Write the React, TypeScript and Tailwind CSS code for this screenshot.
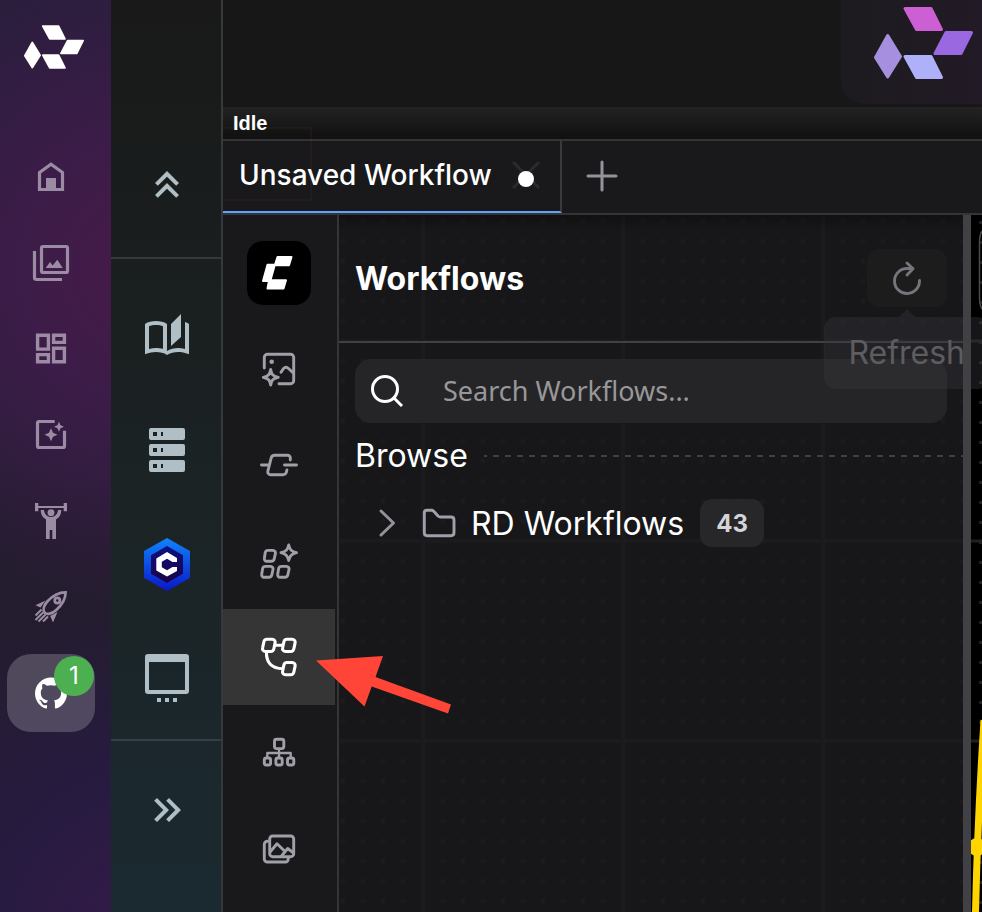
import React from 'react';
import { SiGithub } from 'react-icons/si';

interface IconProps {
  className?: string;
}

interface NavEntry {
  label: string;
  icon: React.FC<IconProps>;
}

// Brand mark, shared by the left rail (white) and the top right corner (tinted)
const BrandMark: React.FC<{ className?: string; colors: string[] }> = ({ className, colors }) => (
  <svg viewBox="0 0 99 72" className={className} strokeWidth="3" strokeLinejoin="round" aria-hidden="true">
    <path d="M31 1.5H57L67.5 22.5H42.5Z" fill={colors[0]} stroke={colors[0]} />
    <path d="M72 25.5H97.5L87 46.5H61Z" fill={colors[1]} stroke={colors[1]} />
    <path d="M31 49.5H57L67.5 70.5H42.5Z" fill={colors[2]} stroke={colors[2]} />
    <path d="M13.7 28.5L26.5 49.5L13.7 70L1.5 50.5Z" fill={colors[3]} stroke={colors[3]} />
  </svg>
);

/* ---------- Left rail icons ---------- */

const HomeIcon: React.FC<IconProps> = ({ className }) => (
  <svg viewBox="0 0 40 40" className={className} fill="none" stroke="currentColor" strokeWidth="3.2">
    <path d="M8.5 32.5V15.5L20 7.2 31.5 15.5V32.5Z" />
    <path d="M15 21H25V33H15Z" fill="currentColor" stroke="none" />
  </svg>
);

const GalleryIcon: React.FC<IconProps> = ({ className }) => (
  <svg viewBox="0 0 40 40" className={className} fill="none" stroke="currentColor" strokeWidth="3.2">
    <rect x="10.5" y="3.5" width="26" height="26" rx="1.5" />
    <path d="M3.5 8V34.5a2 2 0 0 0 2 2H31" />
    <path d="M14.7 25 19 19 21.7 22.5 26.3 16.7 31.7 25Z" fill="currentColor" stroke="none" />
  </svg>
);

const DashboardIcon: React.FC<IconProps> = ({ className }) => (
  <svg viewBox="0 0 40 40" className={className} fill="none" stroke="currentColor" strokeWidth="3.4">
    <path d="M6.6 6.3H17.4V20.1H6.6Z M22.6 6.3H33.4V13.4H22.6Z M22.6 19.3H33.4V32.7H22.6Z M6.6 25.6H17.4V32.7H6.6Z" />
  </svg>
);

const EnhanceIcon: React.FC<IconProps> = ({ className }) => (
  <svg viewBox="0 0 40 40" className={className} fill="none" stroke="currentColor" strokeWidth="3.2">
    <path d="M23.7 6.5H8a1.5 1.5 0 0 0-1.5 1.5V31a1.5 1.5 0 0 0 1.5 1.5H32a1.5 1.5 0 0 0 1.5-1.5V15.7" />
    <g fill="currentColor" stroke="none">
      <path d="M20 13.2 22 17.7 26.5 19.7 22 21.7 20 26.2 18 21.7 13.5 19.7 18 17.7Z" />
      <path d="M28 6.8 29.5 10.2 33 11.7 29.5 13.2 28 16.7 26.5 13.2 23 11.7 26.5 10.2Z" />
    </g>
  </svg>
);

const TrainingIcon: React.FC<IconProps> = ({ className }) => (
  <svg viewBox="0 0 40 40" className={className} fill="currentColor">
    <path d="M4 2H7.3V5H32.7V2H36V10.3H32.7V7H7.3V10.3H4Z" />
    <circle cx="20" cy="11.7" r="3.4" />
    <path d="M9.7 9H13C13.3 13 16 16 20 16S26.7 13 27 9H30.3C30.3 13.5 28.5 16.5 25 18.5V38H21.3V29H18.7V38H15V18.5C11.5 16.5 9.7 13.5 9.7 9Z" />
  </svg>
);

const RocketIcon: React.FC<IconProps> = ({ className }) => (
  <svg viewBox="0 0 40 40" className={className} fill="none" stroke="currentColor" strokeWidth="2.7">
    <path d="M34.6 5.4C27.5 5.4 21.5 8.7 16.3 14.5 12.8 18.5 11.6 23 13.6 25.6 16 28 21 26.8 25 23.2 31 17.8 34.6 12 34.6 5.4Z" />
    <circle cx="26.3" cy="13.5" r="2.6" />
    <path d="M14.5 13.5 4.5 18.3 9.5 20.5Z M26.5 25 22 35.5 19.2 29Z" fill="currentColor" stroke="none" />
    <path d="M10.5 22.5 4.5 28.5M12 25.5 4.5 33M14.5 27.5 7.5 34.5M17 29.5 12 34.5" strokeWidth="2" />
  </svg>
);

/* ---------- Second rail icons ---------- */

const ChevronsUpIcon: React.FC<IconProps> = ({ className }) => (
  <svg viewBox="0 0 24 24" className={className} fill="currentColor">
    <path d="M7.41,18.41L6,17L12,11L18,17L16.59,18.41L12,13.83L7.41,18.41M7.41,12.41L6,11L12,5L18,11L16.59,12.41L12,7.83L7.41,12.41Z" />
  </svg>
);

const ChevronsRightIcon: React.FC<IconProps> = ({ className }) => (
  <svg viewBox="0 0 24 24" className={className} fill="currentColor">
    <path d="M5.59,7.41L7,6L13,12L7,18L5.59,16.59L10.17,12L5.59,7.41M11.59,7.41L13,6L19,12L13,18L11.59,16.59L16.17,12L11.59,7.41Z" />
  </svg>
);

const BookIcon: React.FC<IconProps> = ({ className }) => (
  <svg viewBox="0 0 24 24" className={className} fill="currentColor">
    <path d="M19 1L14 6V17L19 12.5V1M21 5V18.5C19.9 18.15 18.7 18 17.5 18C15.8 18 13.35 18.65 12 19.5V6C10.55 4.9 8.45 4.5 6.5 4.5C4.55 4.5 2.45 4.9 1 6V21.15C3.1 20.45 5.05 20 6.5 20C8.45 20 10.55 20.4 12 21.5C13.35 20.65 15.8 20 17.5 20C19.15 20 20.85 20.3 23 21.1V6C22.4 5.55 21.75 5.25 21 5M10 18.41C8.75 18.09 7.5 18 6.5 18C5.44 18 4.18 18.19 3 18.5V7.13C3.91 6.73 5.14 6.5 6.5 6.5C7.86 6.5 9.09 6.73 10 7.13V18.41Z" />
  </svg>
);

const ServerIcon: React.FC<IconProps> = ({ className }) => (
  <svg viewBox="0 0 24 24" className={className} fill="currentColor" fillRule="evenodd">
    <path d="M4 1H20a1 1 0 0 1 1 1V6a1 1 0 0 1-1 1H4a1 1 0 0 1-1-1V2a1 1 0 0 1 1-1ZM5 3V5H7V3ZM9 3V5H10V3Z" />
    <path d="M4 9H20a1 1 0 0 1 1 1V14a1 1 0 0 1-1 1H4a1 1 0 0 1-1-1V10a1 1 0 0 1 1-1ZM5 11V13H7V11ZM9 11V13H10V11Z" />
    <path d="M4 17H20a1 1 0 0 1 1 1V22a1 1 0 0 1-1 1H4a1 1 0 0 1-1-1V18a1 1 0 0 1 1-1ZM5 19V21H7V19ZM9 19V21H10V19Z" />
  </svg>
);

const HexagonIcon: React.FC<IconProps> = ({ className }) => (
  <svg viewBox="0 0 48 54" className={className}>
    <defs>
      <linearGradient id="hexOuter" x1="0" y1="0" x2="0" y2="1">
        <stop offset="0" stopColor="#0f84fb" />
        <stop offset="1" stopColor="#0a17c8" />
      </linearGradient>
      <linearGradient id="hexInner" x1="0" y1="0" x2="0" y2="1">
        <stop offset="0" stopColor="#0c1080" />
        <stop offset="1" stopColor="#1a0445" />
      </linearGradient>
    </defs>
    <path d="M24 1 47 14V41L24 54 1 41V14Z" fill="url(#hexOuter)" />
    <path d="M24 9 40 18.3V36.7L24 46 8 36.7V18.3Z" fill="url(#hexInner)" />
    <path d="M24 15 34 21V25H29.5L24 21.8 18.8 24.8V30.2L24 33.2 29.5 30H34V34L24 39.5 13.3 33.5V21.5Z" fill="#fff" />
  </svg>
);

const WindowIcon: React.FC<IconProps> = ({ className }) => (
  <svg viewBox="0 0 48 48" className={className} fill="currentColor" fillRule="evenodd">
    <path d="M5 0H43a3 3 0 0 1 3 3V37a3 3 0 0 1-3 3H5a3 3 0 0 1-3-3V3a3 3 0 0 1 3-3ZM6 8V36H42V8Z" />
    <path d="M14 44H18V48H14ZM22 44H26V48H22ZM30 44H34V48H30Z" />
  </svg>
);

/* ---------- Workflow sidebar icons ---------- */

const Line: React.FC<IconProps & { children: React.ReactNode }> = ({ className, children }) => (
  <svg
    viewBox="0 0 40 40"
    className={className}
    fill="none"
    stroke="currentColor"
    strokeWidth="2.9"
    strokeLinecap="round"
    strokeLinejoin="round"
  >
    {children}
  </svg>
);

const AssetsIcon: React.FC<IconProps> = ({ className }) => (
  <Line className={className}>
    <path d="M5.3 19V8.3a3 3 0 0 1 3-3H31.7a3 3 0 0 1 3 3V31.7a3 3 0 0 1-3 3H20" />
    <circle cx="12.7" cy="12.7" r="2.3" fill="currentColor" stroke="none" />
    <path d="M22 23.3 24.5 19.5Q27 17 29.5 19.5L34 23.7" />
    <path d="M11.7 20.5C12.5 25.5 13.5 27 19.3 28.3 13.5 29.7 12.7 31 11.7 36 10.7 31 9.8 29.7 4.3 28.3 9.8 27 10.7 25.5 11.7 20.5Z" />
  </Line>
);

const NodeIcon: React.FC<IconProps> = ({ className }) => (
  <Line className={className}>
    <path d="M2.5 20H9.5M25.5 20H37.5" />
    <path d="M31.3 15V13a2.7 2.7 0 0 0-2.7-2.7H15.5a3.5 3.5 0 0 0-3.3 2.5L8.9 26a2.9 2.9 0 0 0 2.9 3.7H24a3.5 3.5 0 0 0 3.4-2.7L27.9 25" />
  </Line>
);

const ModelsIcon: React.FC<IconProps> = ({ className }) => (
  <Line className={className}>
    <path d="M9.1 9.4H14a2.5 2.5 0 0 1 2.4 3.1L15.2 18a3 3 0 0 1-2.9 2.3H7.8a2.5 2.5 0 0 1-2.4-3.1L6.2 11.7a3 3 0 0 1 2.9-2.3Z" />
    <path d="M6.5 25.4H11.6a2.5 2.5 0 0 1 2.4 3.1L12.8 34a3 3 0 0 1-2.9 2.3H5.1a2.5 2.5 0 0 1-2.4-3.1L3.6 27.7a3 3 0 0 1 2.9-2.3Z" />
    <path d="M22.5 25.4H27.6a2.5 2.5 0 0 1 2.4 3.1L28.8 34a3 3 0 0 1-2.9 2.3H21.1a2.5 2.5 0 0 1-2.4-3.1L19.6 27.7a3 3 0 0 1 2.9-2.3Z" />
    <path d="M29.7 4C31 9 32.5 10.5 37.5 11.7 32.5 13 31 14.5 29.7 19.5 28.5 14.5 27 13 22 11.7 27 10.5 28.5 9 29.7 4Z" />
  </Line>
);

const WorkflowIcon: React.FC<IconProps> = ({ className }) => (
  <svg viewBox="0 0 40 40" className={className} fill="none" stroke="currentColor" strokeWidth="3.1">
    <path d="M8 2.2H13.2a3 3 0 0 1 2.9 3.7L14.8 12a3.2 3.2 0 0 1-3.1 2.5H6.5a3 3 0 0 1-2.9-3.7L4.9 4.7A3.2 3.2 0 0 1 8 2.2Z" />
    <path d="M28 2.2H33.2a3 3 0 0 1 2.9 3.7L34.8 12a3.2 3.2 0 0 1-3.1 2.5H26.5a3 3 0 0 1-2.9-3.7L24.9 4.7A3.2 3.2 0 0 1 28 2.2Z" />
    <path d="M28 25.5H33.2a3 3 0 0 1 2.9 3.7L34.8 35.3a3.2 3.2 0 0 1-3.1 2.5H26.5a3 3 0 0 1-2.9-3.7L24.9 28A3.2 3.2 0 0 1 28 25.5Z" />
    <path d="M15.5 8.3H24M7.5 14.5C7 25 12 31.7 24 31.7" />
  </svg>
);

const TreeIcon: React.FC<IconProps> = ({ className }) => (
  <Line className={className}>
    <rect x="15.5" y="6.3" width="9.3" height="9.3" rx="2" />
    <rect x="5.3" y="25" width="6.3" height="7" rx="2" />
    <rect x="16.9" y="25" width="6.3" height="7" rx="2" />
    <rect x="28.5" y="25" width="6.3" height="7" rx="2" />
    <path d="M20 16V25M8.3 24.5V20H31.7V24.5" strokeWidth="2.3" />
  </Line>
);

const MediaIcon: React.FC<IconProps> = ({ className }) => (
  <Line className={className}>
    <rect x="10.7" y="7" width="24" height="20.7" rx="3" />
    <path d="M8.5 12.3A3 3 0 0 0 5.3 15.3V30a3 3 0 0 0 3 3H26.5a2.7 2.7 0 0 0 2.7-2.7V29" />
    <path d="M11.5 22.5 18 14.8 25 21.5M22.5 27 28.7 19.5 34 23.5" />
  </Line>
);

const railItems: NavEntry[] = [
  { label: 'Home', icon: HomeIcon },
  { label: 'Gallery', icon: GalleryIcon },
  { label: 'Dashboard', icon: DashboardIcon },
  { label: 'Enhance', icon: EnhanceIcon },
  { label: 'Training', icon: TrainingIcon },
  { label: 'Launch', icon: RocketIcon },
];

const toolItems: NavEntry[] = [
  { label: 'Docs', icon: BookIcon },
  { label: 'Servers', icon: ServerIcon },
  { label: 'Comfy', icon: HexagonIcon },
  { label: 'Window', icon: WindowIcon },
];

const sideItems: NavEntry[] = [
  { label: 'Assets', icon: AssetsIcon },
  { label: 'Nodes', icon: NodeIcon },
  { label: 'Models', icon: ModelsIcon },
  { label: 'Workflows', icon: WorkflowIcon },
  { label: 'Templates', icon: TreeIcon },
  { label: 'Media', icon: MediaIcon },
];

const AppRail: React.FC = () => (
  <nav
    aria-label="Application"
    className="w-[111px] shrink-0 bg-[#231c2f] bg-[radial-gradient(circle_at_150px_270px,#481b48_0px,#3b1c48_140px,transparent_340px),radial-gradient(circle_at_150px_940px,#351a49_0px,#271b40_160px,transparent_330px),linear-gradient(180deg,#261e3a_0%,#261e3a_20%,#231c2e_60%,#251d33_100%)]"
  >
    <a href="#home" aria-label="Start" className="block pt-[25px] pl-6">
      <BrandMark className="h-11 w-[60px]" colors={['#fff', '#fff', '#fff', '#fff']} />
    </a>
    <div className="mt-[69px] flex flex-col gap-2 pr-4 pl-[7px]">
      {railItems.map(({ label, icon: Icon }) => (
        <button key={label} aria-label={label} className="flex h-[78px] items-center justify-center text-[#9b8ca3]">
          <Icon className="h-10 w-10" />
        </button>
      ))}
      <button
        aria-label="GitHub"
        className="relative flex h-[78px] items-center justify-center rounded-3xl bg-white/20 text-white"
      >
        <SiGithub className="h-8 w-8" />
        <span className="absolute top-[2px] right-px flex h-10 w-10 items-center justify-center rounded-full bg-[#4caf50] text-2xl">
          1
        </span>
      </button>
    </div>
  </nav>
);

const ToolRail: React.FC = () => (
  <nav
    aria-label="Tools"
    className="w-28 shrink-0 border-r-2 border-[#343a3b] bg-linear-to-b from-[#181918] via-[#1b2223] to-[#1b2a31] text-[#b0bec5]"
  >
    <div className="flex justify-center border-b-2 border-[#343a3c] pt-[161px] pb-12 pl-0.5">
      <button aria-label="Collapse">
        <ChevronsUpIcon className="h-12 w-12" />
      </button>
    </div>
    <div className="flex flex-col items-center gap-[66px] border-b-2 border-[#343f41] pt-[53px] pb-[37px] pl-0.5">
      {toolItems.map(({ label, icon: Icon }) => (
        <button key={label} aria-label={label} className="flex h-12 w-12 items-center justify-center">
          {label === 'Comfy' ? <Icon className="h-[54px] w-12 shrink-0" /> : <Icon className="h-12 w-12" />}
        </button>
      ))}
    </div>
    <div className="flex justify-center pt-[45px] pl-0.5">
      <button aria-label="Expand">
        <ChevronsRightIcon className="h-12 w-12" />
      </button>
    </div>
  </nav>
);

const TopArea: React.FC = () => (
  <header>
    <div className="flex h-[107px] items-start justify-end bg-[#171717]">
      <div className="h-[104px] w-[141px] rounded-bl-3xl bg-linear-to-r from-[#1d1b1f] to-[#221a26] pt-[7px] pl-[33px]">
        <BrandMark className="h-[72px] w-[99px]" colors={['#cb5fd3', '#9a68e0', '#aeb0fa', '#a68fde']} />
      </div>
    </div>
    <div className="relative flex h-8 items-center bg-linear-to-b from-[#232323] to-[#101010] px-[10px]">
      <span className="text-xl font-bold text-white [font-family:'Liberation_Sans',Arial,sans-serif]">Idle</span>
      <span className="absolute top-5 left-0 h-[74px] w-[89px] border-2 border-l-0 border-[#ff5050]/5" />
    </div>
    <div className="flex h-[76px] border-y-2 border-[#343436] bg-[#19191b]">
      <div className="flex w-[339px] items-center justify-between border-r-2 border-b-2 border-r-[#3a3a3e] border-b-[#5fa4f9] pr-5 pb-0.5 pl-4">
        <span className="text-[28px] font-medium text-white">Unsaved Workflow</span>
        <button aria-label="Close tab">
          <svg viewBox="0 0 30 34" className="h-[34px] w-[30px]" stroke="#2b2b2d" strokeWidth="3" strokeLinecap="round">
            <path d="M4 5 28 29M28 5 4 29" />
            <circle cx="16" cy="21" r="8" fill="#fff" stroke="none" />
          </svg>
        </button>
      </div>
      <button aria-label="New tab" className="flex w-20 items-center justify-center pb-0.5">
        <svg viewBox="0 0 32 32" className="h-8 w-8" stroke="#93939c" strokeWidth="3" strokeLinecap="round">
          <path d="M16 2V30M2 16H30" />
        </svg>
      </button>
    </div>
  </header>
);

const WorkflowSidebar: React.FC = () => (
  <nav aria-label="Sidebar" className="w-[116px] shrink-0 border-r-2 border-[#343436] bg-[#19191b] pt-[26px]">
    <button aria-label="Menu" className="mb-4 ml-6 block h-16 w-16 rounded-2xl bg-black">
      <svg viewBox="0 0 64 64" className="h-16 w-16" fill="#fff" stroke="#fff" strokeWidth="2" strokeLinejoin="round">
        <path d="M30.5 16H44.5L42 24.3H27.7L23.5 39.2H39L36.5 47.5H20.5L22 40H16L20.5 23.7H28Z" />
      </svg>
    </button>
    {sideItems.map(({ label, icon: Icon }) => (
      <button
        key={label}
        aria-label={label}
        className={
          label === 'Workflows'
            ? 'flex h-24 w-28 items-center justify-center bg-[#353535] text-white'
            : 'flex h-24 w-28 items-center justify-center text-[#a0a0a9]'
        }
      >
        <Icon className="h-10 w-10" />
      </button>
    ))}
  </nav>
);

// The canvas grid shows faintly through the panel: a line each 200px, a dot each 20px
const WorkflowPanel: React.FC = () => (
  <section className="min-w-0 flex-1 bg-[#171719] bg-[linear-gradient(180deg,#0000004d,transparent_16px),repeating-linear-gradient(90deg,transparent_0px,transparent_82px,#1b1b1d_82px,#1b1b1d_86px,transparent_86px,transparent_200px),repeating-linear-gradient(180deg,transparent_0px,transparent_124px,#1b1b1d_124px,#1b1b1d_128px,transparent_128px,transparent_200px),radial-gradient(circle_at_4px_6px,#1b1b1d_0px,#1b1b1d_2px,transparent_3px)] bg-size-[auto,auto,auto,20px_20px]">
    <div className="flex items-center justify-between border-b-2 border-[#404045] px-4 py-[34px]">
      <h1 className="pt-0.5 text-[32px] leading-10 font-bold text-white">Workflows</h1>
      <div className="relative">
        <button
          aria-label="Refresh"
          aria-describedby="refresh-tip"
          className="flex h-[58px] w-20 items-center justify-center rounded-xl bg-[#1c1c1c] text-[#75757c]"
        >
          <svg viewBox="0 0 36 36" className="h-9 w-9" fill="none" stroke="currentColor" strokeWidth="2.9" strokeLinecap="round" strokeLinejoin="round">
            <path d="M30.5 20.5a12.5 12.5 0 1 1-12.5-12H24M18 3 24 8.7 18 15" />
          </svg>
        </button>
        <div
          id="refresh-tip"
          role="tooltip"
          className="absolute top-[68px] right-[-42px] z-10 rounded-xl bg-[#36363c]/40 px-6 py-4 text-[32px] leading-10 whitespace-nowrap text-[#5d5d60]"
        >
          <svg viewBox="0 0 16 8" className="absolute -top-2 left-[75px] h-2 w-4" fill="#232327">
            <path d="M8 0 16 8H0Z" />
          </svg>
          Refresh
        </div>
      </div>
    </div>

    <div className="px-4 pt-4">
      <label className="flex h-16 items-center rounded-2xl bg-[#252527] pl-4">
        <svg viewBox="0 0 32 32" className="h-8 w-8 shrink-0" fill="none" stroke="#fff" strokeWidth="3">
          <circle cx="14" cy="14" r="12.5" />
          <path d="M22.5 22.5 31 31" />
        </svg>
        <input
          type="text"
          aria-label="Search workflows"
          placeholder="Search Workflows..."
          className="ml-10 min-w-0 flex-1 bg-transparent text-[27px] text-white outline-none placeholder:text-[#98989a] [font-family:'Noto_Sans',sans-serif]"
        />
      </label>
    </div>

    <div className="mt-[13px] flex items-center gap-4 pl-4">
      <h2 className="text-[32px] leading-10 text-white">Browse</h2>
      <div className="h-0.5 flex-1 bg-[repeating-linear-gradient(90deg,#3f3f46_0px,#3f3f46_3px,transparent_3px,transparent_9px,#3f3f46_9px,#3f3f46_12px)]" />
    </div>

    <button className="mt-[23px] ml-8 flex h-12 items-center text-[32px] text-white">
      <svg viewBox="0 0 32 32" className="h-8 w-8" fill="none" stroke="#93939c" strokeWidth="3" strokeLinecap="round" strokeLinejoin="round">
        <path d="M10 4 22.5 16 10 28" />
      </svg>
      <svg viewBox="0 0 36 32" className="ml-[18px] h-8 w-9" fill="none" stroke="#a0a0a9" strokeWidth="2.9" strokeLinejoin="round">
        <path d="M6 3.3H10.500Q12 3.3 13 4.5L17 9Q18 10 19.5 10H30Q33 10 33 13V25.5Q33 28.7 30 28.7H6Q3.3 28.7 3.3 25.5V6Q3.3 3.3 6 3.3Z" />
      </svg>
      <span className="ml-[14px] pt-0.5">RD Workflows</span>
      <span className="ml-4 flex h-12 w-16 items-center justify-center rounded-xl bg-[#27272a] pt-0.5 text-2xl font-bold text-[#d4d4d8]">
        43
      </span>
    </button>
  </section>
);

const App: React.FC = () => (
  <div className="relative flex min-h-screen overflow-hidden bg-[#171719] [font-family:Inter,sans-serif]">
    <AppRail />
    <ToolRail />
    <main className="flex min-w-0 flex-1 flex-col">
      <TopArea />
      <div className="flex flex-1">
        <WorkflowSidebar />
        <WorkflowPanel />
        <div className="z-20 w-2 shrink-0 bg-[#404045]" />
        {/* Edge of the node canvas */}
        <div className="w-[11px] shrink-0 overflow-hidden bg-black">
          <svg viewBox="0 0 11 697" className="h-[697px] w-[11px]" fill="none">
            <path d="M0 126H11M0 326H11M0 526H11" stroke="#202023" strokeWidth="3" />
            <path d="M9.5 6V697" stroke="#202023" strokeWidth="3" strokeDasharray="3 17" />
            <path d="M11 16Q8.5 20 8.5 28V82Q8.5 90 11 94" stroke="#4a4a4c" strokeWidth="1.5" />
            <path d="M13 505C11 540 7 590 4.5 697" stroke="#ffd500" strokeWidth="7" />
            <circle cx="6" cy="632" r="9" fill="#ffd500" />
          </svg>
        </div>
      </div>
    </main>
    {/* Pointer to the active sidebar entry */}
    <svg viewBox="0 0 136 60" className="absolute top-[655px] left-[316px] h-[60px] w-[136px]" fill="#ff4438">
      <path d="M0 5.5 67 1 59.5 22 135 49.5 132 58.5 55.7 31.5 48.5 51.5Z" />
    </svg>
  </div>
);

export default App;
